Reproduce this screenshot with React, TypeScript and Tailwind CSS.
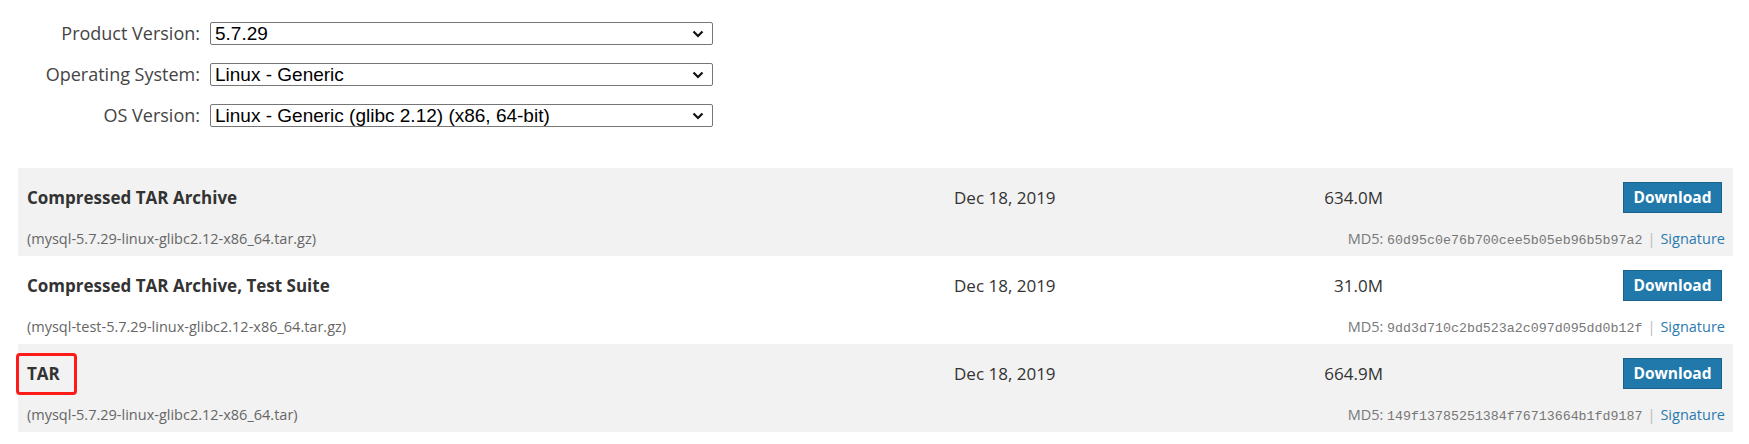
import React from "react";

const selects = [
  { label: "Product Version:", value: "5.7.29" },
  { label: "Operating System:", value: "Linux - Generic" },
  { label: "OS Version:", value: "Linux - Generic (glibc 2.12) (x86, 64-bit)" },
];

const rows = [
  {
    name: "Compressed TAR Archive",
    file: "(mysql-5.7.29-linux-glibc2.12-x86_64.tar.gz)",
    date: "Dec 18, 2019",
    size: "634.0M",
    md5: "60d95c0e76b700cee5b05eb96b5b97a2",
    grey: true,
  },
  {
    name: "Compressed TAR Archive, Test Suite",
    file: "(mysql-test-5.7.29-linux-glibc2.12-x86_64.tar.gz)",
    date: "Dec 18, 2019",
    size: "31.0M",
    md5: "9dd3d710c2bd523a2c097d095dd0b12f",
    grey: false,
  },
  {
    name: "TAR",
    file: "(mysql-5.7.29-linux-glibc2.12-x86_64.tar)",
    date: "Dec 18, 2019",
    size: "664.9M",
    md5: "149f13785251384f76713664b1fd9187",
    grey: true,
    marked: true,
  },
];

function Chevron() {
  return (
    <svg width="12" height="8" viewBox="0 0 12 8" className="pointer-events-none absolute right-[9px] top-[8px]">
      <path d="M1.5 1.5 L6 6 L10.5 1.5" fill="none" stroke="#111" strokeWidth="2.2" />
    </svg>
  );
}

export default function App() {
  return (
    <div className="bg-white w-[1749px] h-[444px] font-['Open_Sans',sans-serif] text-[#333]">
      {/* Filters */}
      <div className="pt-[22px] flex flex-col gap-[18px]">
        {selects.map((s) => (
          <div key={s.label} className="flex items-center h-[23px]">
            <label className="w-[201px] text-right text-[18px] text-[#444] pr-[1px] whitespace-nowrap">{s.label}</label>
            <div className="relative ml-[9px] w-[503px] h-[23px]">
              <select
                defaultValue={s.value}
                className="appearance-none w-full h-full border border-[#767676] rounded-[2px] bg-white pl-[4px] text-[19px] leading-[21px] text-black font-['Liberation_Sans',Arial,sans-serif] outline-none"
              >
                <option>{s.value}</option>
              </select>
              <Chevron />
            </div>
          </div>
        ))}
      </div>

      {/* Downloads */}
      <div className="mt-[41px] ml-[18px] w-[1715px]">
        {rows.map((r) => (
          <div key={r.name} className={`${r.grey ? "bg-[#f2f2f2]" : "bg-white"} pl-[9px] pr-[8px] pt-[14px] pb-[7px]`}>
            <div className="flex items-center h-[31px]">
              <div className="w-[927px] text-[17px] font-bold text-[#333]">
                <span className="relative inline-block">
                  {r.name}
                  {r.marked && (
                    <span className="absolute left-[-11px] top-[-8px] w-[61px] h-[42px] border-[3px] border-[#ff1a1a] rounded-[4px]" />
                  )}
                </span>
              </div>
              <div className="w-[300px] text-[17px] text-[#333]">{r.date}</div>
              <div className="w-[129px] text-right text-[17px] text-[#333]">{r.size}</div>
              <button className="ml-auto mr-[3px] w-[99px] h-[31px] bg-[#2179ab] border border-[#1a628c] text-white text-[15.5px] font-bold">
                Download
              </button>
            </div>
            <div className="mt-[16px] flex items-center justify-between h-[20px] text-[14.5px]">
              <span className="text-[#666]">{r.file}</span>
              <span className="text-[#777]">
                MD5:{" "}
                <span className="font-['Liberation_Mono',monospace] text-[13.3px] text-[#777]">{r.md5}</span>
                <span className="mx-[5px] text-[#bbb]">|</span>
                <a className="text-[#2b7bb0]">Signature</a>
              </span>
            </div>
          </div>
        ))}
      </div>
    </div>
  );
}
